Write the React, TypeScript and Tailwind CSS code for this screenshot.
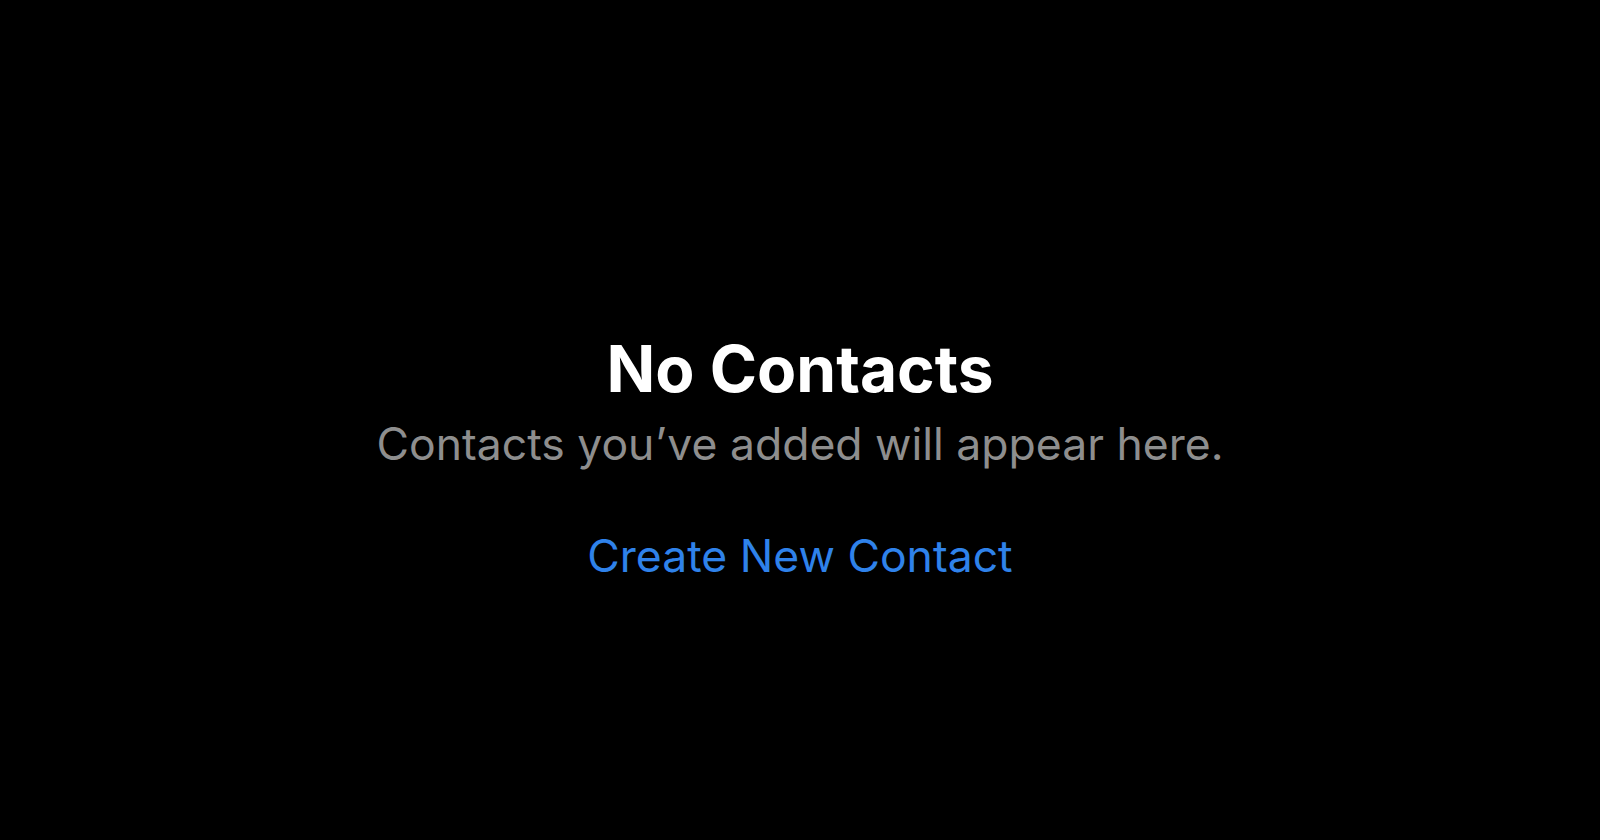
import React from "react";

export default function App() {
  return (
    <div className="w-full h-[840px] bg-black flex flex-col items-center pt-[337px] font-['Inter','Liberation_Sans',sans-serif]">
      <h1 className="text-[64px] leading-[64px] font-bold text-white">No Contacts</h1>
      <p className="mt-[21px] text-[44.5px] leading-[44.5px] text-[#8e8e8e]">Contacts you’ve added will appear here.</p>
      <button className="mt-[67px] text-[44.5px] leading-[44.5px] text-[#2f82ea]">Create New Contact</button>
    </div>
  );
}
